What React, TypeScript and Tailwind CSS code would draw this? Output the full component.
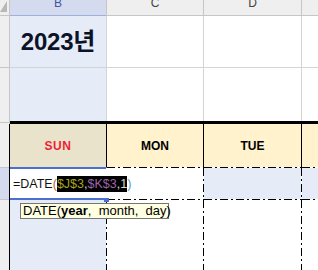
import type { ReactNode } from "react";

const GRID = "bg-[#d4d4d4]";
const HDRLINE = "bg-[#c6c6c6]";
const BLACK = "bg-black";
const BLUE = "bg-[#4a6fd0]";
const DASH_H =
  "bg-[repeating-linear-gradient(90deg,#000_0_8px,transparent_8px_11px,#000_11px_13px,transparent_13px_16px)]";
const DASH_V =
  "bg-[repeating-linear-gradient(180deg,#000_0_8px,transparent_8px_11px,#000_11px_13px,transparent_13px_16px)]";

// column widths: row header | B | C | D | E
const W = ["w-[9px]", "w-[96px]", "w-[96px]", "w-[97px]", "flex-1"];

function HLine({ segs, joints }: { segs: string[]; joints: string[] }) {
  return (
    <div className="flex h-px">
      {segs.map((s, i) => (
        <div key={i} className="contents">
          <div className={`${W[i]} h-px ${s}`} />
          {i < 4 && <div className={`w-px h-px ${joints[i]}`} />}
        </div>
      ))}
    </div>
  );
}

function Row({ h, cells, seps }: { h: string; cells: ReactNode[]; seps: string[] }) {
  return (
    <div className={`flex ${h}`}>
      {cells.map((c, i) => (
        <div key={i} className="contents">
          {c}
          {i < 4 && <div className={`w-px shrink-0 ${seps[i]}`} />}
        </div>
      ))}
    </div>
  );
}

export default function App() {
  const font = "font-['Liberation_Sans',Arial,'Noto_Sans_CJK_KR',sans-serif]";
  return (
    <div className={`relative w-[318px] h-[270px] overflow-hidden bg-white ${font}`}>
      {/* column headers */}
      <Row
        h="h-[15px]"
        seps={[HDRLINE, HDRLINE, HDRLINE, HDRLINE]}
        cells={[
          <div className={`${W[0]} bg-[#efefef] relative`}>
            <svg width="9" height="15" className="absolute left-0 top-0">
              <polygon points="0,12 7,12 7,1" fill="#b8b8b8" />
            </svg>
          </div>,
          <div className={`${W[1]} bg-[#d5dbee] flex justify-center`}>
            <span className="text-[12px] leading-[12px] -mt-[3px] text-[#3d55a3]">B</span>
          </div>,
          <div className={`${W[2]} bg-[#efefef] flex justify-center`}>
            <span className="text-[12px] leading-[12px] -mt-[3px] text-[#444]">C</span>
          </div>,
          <div className={`${W[3]} bg-[#efefef] flex justify-center`}>
            <span className="text-[12px] leading-[12px] -mt-[3px] text-[#444]">D</span>
          </div>,
          <div className={`${W[4]} bg-[#efefef]`} />,
        ]}
      />
      <HLine segs={[HDRLINE, "bg-[#9fb0dc]", HDRLINE, HDRLINE, HDRLINE]} joints={[HDRLINE, HDRLINE, HDRLINE, HDRLINE]} />

      {/* row 1: year */}
      <Row
        h="h-[51px]"
        seps={[HDRLINE, GRID, GRID, GRID]}
        cells={[
          <div className={`${W[0]} bg-[#efefef]`} />,
          <div className={`${W[1]} bg-[#e6ecf7] flex items-center justify-center`}>
            <span className="text-[24px] font-bold text-[#0d1326] tracking-[-0.2px]">2023년</span>
          </div>,
          <div className={`${W[2]}`} />,
          <div className={`${W[3]}`} />,
          <div className={`${W[4]}`} />,
        ]}
      />
      <HLine segs={[HDRLINE, GRID, GRID, GRID, GRID]} joints={[HDRLINE, GRID, GRID, GRID]} />

      {/* row 2: empty */}
      <Row
        h="h-[53px]"
        seps={[HDRLINE, GRID, GRID, GRID]}
        cells={[
          <div className={`${W[0]} bg-[#efefef]`} />,
          <div className={`${W[1]} bg-[#e6ecf7]`} />,
          <div className={`${W[2]}`} />,
          <div className={`${W[3]}`} />,
          <div className={`${W[4]}`} />,
        ]}
      />
      {/* thick border */}
      <div className="flex h-[3px]">
        <div className={`${W[0]} flex flex-col`}>
          <div className="h-px bg-[#efefef]" />
          <div className={`h-px ${HDRLINE}`} />
          <div className="h-px bg-[#efefef]" />
        </div>
        <div className={`w-px ${HDRLINE}`} />
        <div className="flex-1 bg-black" />
      </div>

      {/* row 3: weekdays */}
      <Row
        h="h-[43px]"
        seps={[BLACK, BLACK, BLACK, BLACK]}
        cells={[
          <div className={`${W[0]} bg-[#efefef]`} />,
          <div className={`${W[1]} bg-[#e9e3cc] flex items-center justify-center`}>
            <span className="text-[12px] font-bold text-[#ee1f34] tracking-[0.5px]">SUN</span>
          </div>,
          <div className={`${W[2]} bg-[#fff2cc] flex items-center justify-center`}>
            <span className="text-[12px] font-bold text-black">MON</span>
          </div>,
          <div className={`${W[3]} bg-[#fff2cc] flex items-center justify-center`}>
            <span className="text-[12px] font-bold text-black">TUE</span>
          </div>,
          <div className={`${W[4]} bg-[#fff2cc]`} />,
        ]}
      />
      <HLine segs={[HDRLINE, BLUE, DASH_H, DASH_H, DASH_H]} joints={[BLACK, BLUE, BLACK, BLACK]} />

      {/* row 4: formula being edited */}
      <Row
        h="h-[31px]"
        seps={[BLACK, "bg-white", DASH_V, DASH_V]}
        cells={[
          <div className={`${W[0]} bg-[#d5dbee]`} />,
          <div className={`${W[1]} bg-white border-y border-[#4a6fd0] flex items-center pl-[3px] relative z-10`}>
            <span className="text-[12.5px] leading-[16px] whitespace-nowrap text-[#111]">
              =DATE<span className="text-[#c8611e]">(</span>
              <span className="bg-black py-[1px]">
                <span className="text-[#a9a31d]">$J$3</span>
                <span className="text-[#d6d6d6]">,</span>
                <span className="text-[#9c64aa]">$K$3</span>
                <span className="text-[#d6d6d6]">,1</span>
              </span>
              <span className="text-[#4f9fc9]">)</span>
            </span>
          </div>,
          <div className={`${W[2]} bg-white`} />,
          <div className={`${W[3]} bg-[#e6ecf7]`} />,
          <div className={`${W[4]} bg-[#e6ecf7]`} />,
        ]}
      />
      <div className="relative">
        <HLine segs={[HDRLINE, BLUE, DASH_H, DASH_H, DASH_H]} joints={[BLACK, BLUE, BLACK, BLACK]} />
        <div className="absolute left-[104px] -top-px w-[5px] h-[4px] bg-[#4a6fd0]" />
      </div>

      {/* row 5 */}
      <Row
        h="h-[70px]"
        seps={[BLACK, DASH_V, DASH_V, DASH_V]}
        cells={[
          <div className={`${W[0]} bg-[#efefef]`} />,
          <div className={`${W[1]} bg-[#e6ecf7]`} />,
          <div className={`${W[2]}`} />,
          <div className={`${W[3]}`} />,
          <div className={`${W[4]}`} />,
        ]}
      />

      {/* function tooltip */}
      <div className="absolute left-[20px] top-[203px] h-[16px] w-[149px] border border-[#767676] bg-[#ffffe1] flex items-center pl-[2px] text-[13px] leading-[14px] text-black whitespace-nowrap">
        DATE(<span className="font-bold">year</span>,&nbsp; month,&nbsp; day)
      </div>
    </div>
  );
}
